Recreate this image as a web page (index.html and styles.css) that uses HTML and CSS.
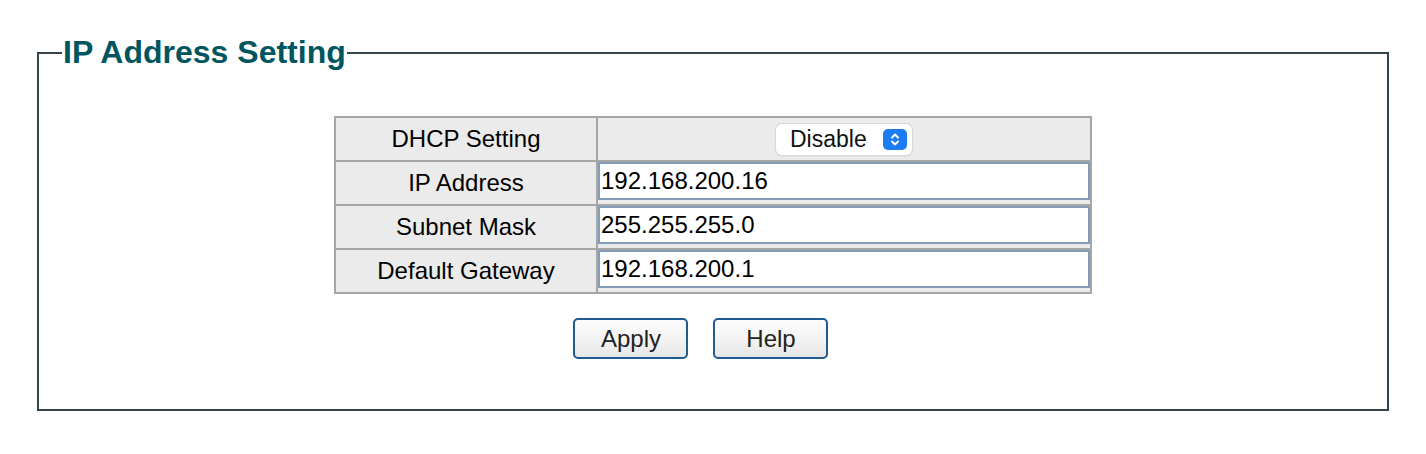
FILE: index.html
```html
<!DOCTYPE html>
<html>
<head>
<meta charset="utf-8">
<link rel="stylesheet" href="styles.css">
</head>
<body>
<form class="page">
  <fieldset class="panel">
    <legend class="panel-title">IP Address Setting</legend>
    <table class="settings">
      <tr>
        <td class="label">DHCP Setting</td>
        <td class="value center">
          <span class="select-wrap">
            <select class="select">
              <option>Disable</option>
              <option>Enable</option>
            </select>
            <svg class="stepper" width="24" height="21" viewBox="0 0 24 21">
              <rect x="0" y="0" width="24" height="21" rx="5" fill="#1b7cf4"/>
              <path d="M9 8.5 L12 5.5 L15 8.5" fill="none" stroke="#fff" stroke-width="1.9" stroke-linecap="round" stroke-linejoin="round"/>
              <path d="M9 12.5 L12 15.5 L15 12.5" fill="none" stroke="#fff" stroke-width="1.9" stroke-linecap="round" stroke-linejoin="round"/>
            </svg>
          </span>
        </td>
      </tr>
      <tr>
        <td class="label">IP Address</td>
        <td class="value"><input class="field" type="text" value="192.168.200.16"></td>
      </tr>
      <tr>
        <td class="label">Subnet Mask</td>
        <td class="value"><input class="field" type="text" value="255.255.255.0"></td>
      </tr>
      <tr>
        <td class="label">Default Gateway</td>
        <td class="value"><input class="field" type="text" value="192.168.200.1"></td>
      </tr>
    </table>
    <div class="actions">
      <button type="button" class="btn">Apply</button>
      <button type="button" class="btn">Help</button>
    </div>
  </fieldset>
</form>
</body>
</html>
```

FILE: styles.css
```css
html, body {
  margin: 0;
  padding: 0;
  background: #ffffff;
}

body {
  font-family: "Liberation Sans", Arial, sans-serif;
  color: #000;
}

.page {
  padding: 34px 37px 0 37px;
  margin: 0;
}

.panel {
  margin: 0;
  border: 2px solid #36454d;
  padding: 45px 0 50px 0;
  min-width: 0;
}

.panel-title {
  margin-left: 23px;
  padding: 0 1px;
  font-family: "Liberation Sans", Arial, sans-serif;
  font-weight: bold;
  font-size: 32px;
  line-height: 37px;
  color: #00555f;
}

.settings {
  width: 758px;
  margin: 0 auto;
  border-collapse: separate;
  border-spacing: 0;
  border: 1px solid #a6a6a6;
}

.settings td {
  box-sizing: border-box;
  height: 44px;
  padding: 0;
  border: 1px solid #a6a6a6;
  background: #ebebeb;
  font-size: 24px;
}

.label {
  width: 262px;
  text-align: center;
  vertical-align: middle;
}

.value {
  vertical-align: top;
}

.value.center {
  text-align: center;
  vertical-align: middle;
}

.field {
  display: block;
  box-sizing: border-box;
  width: 100%;
  height: 38px;
  margin: 0;
  padding: 0 0 0 1px;
  border: 2px solid #849db8;
  background: #fff;
  font-family: "Liberation Sans", Arial, sans-serif;
  font-size: 24px;
  color: #000;
  outline: none;
}

.select-wrap {
  display: inline-flex;
  align-items: center;
  box-sizing: border-box;
  width: 136px;
  height: 31px;
  padding: 0 5px 0 14px;
  background: #fff;
  border-radius: 6px;
  box-shadow: 0 0 0 1px #d8d8d8, 0 1px 2px rgba(0,0,0,0.12);
  vertical-align: middle;
}

.select {
  appearance: none;
  -webkit-appearance: none;
  flex: 1;
  min-width: 0;
  border: none;
  background: transparent;
  padding: 0;
  margin: 0;
  font-family: "Liberation Sans", Arial, sans-serif;
  font-size: 23px;
  color: #111;
  outline: none;
}

.stepper {
  flex: none;
  display: block;
}

.actions {
  display: flex;
  justify-content: center;
  gap: 25px;
  margin-top: 24px;
  padding-right: 25px;
}

.btn {
  box-sizing: border-box;
  width: 115px;
  height: 41px;
  margin: 0;
  padding: 0 0 0 1px;
  border: 2px solid #1f5a90;
  border-radius: 5px;
  background: linear-gradient(#fdfdfd, #f1f1f1 60%, #e6e6e6);
  font-family: "Liberation Sans", Arial, sans-serif;
  font-size: 24px;
  line-height: 1;
  color: #222;
}
```
